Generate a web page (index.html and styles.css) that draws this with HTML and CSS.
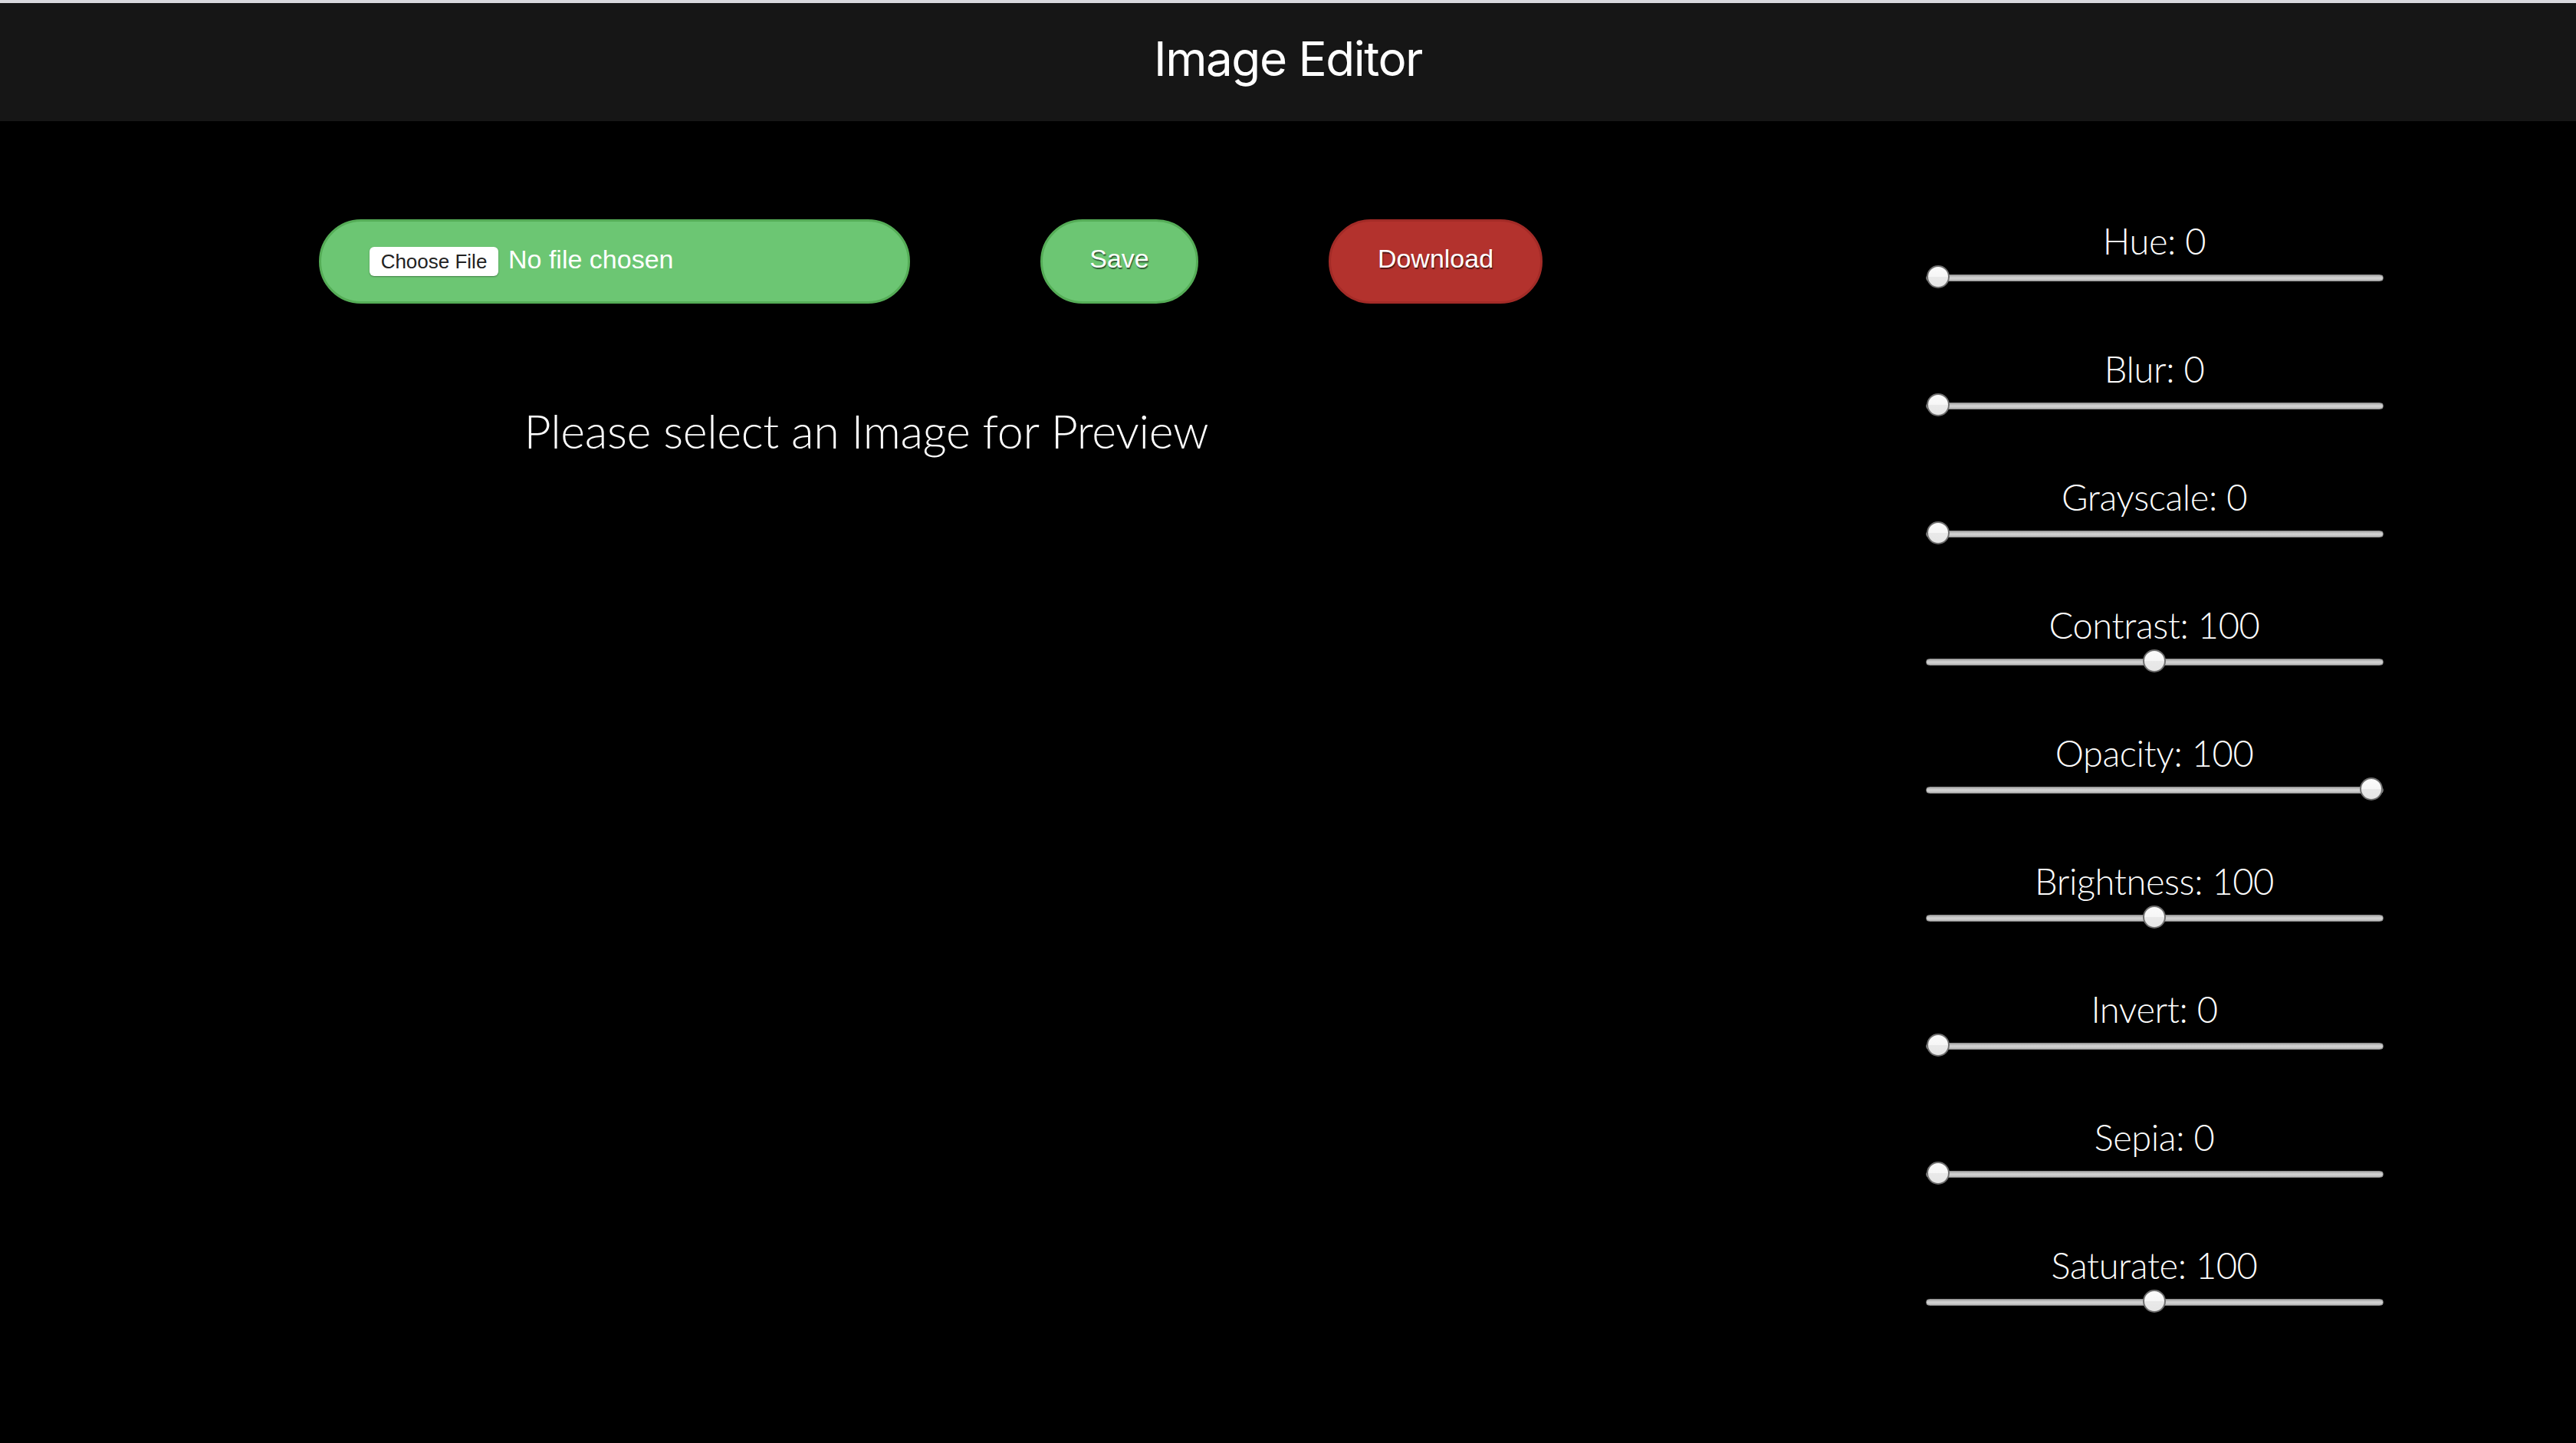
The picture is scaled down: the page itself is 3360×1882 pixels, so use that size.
FILE: index.html
```html
<!DOCTYPE html>
<html lang="en">
<head>
<meta charset="utf-8">
<title>Image Editor</title>
<link rel="stylesheet" href="styles.css">
</head>
<body>
<div class="topline"></div>
<header class="header">
  <h1 class="title">Image Editor</h1>
</header>
<main class="main">
  <section class="workspace">
    <div class="toolbar">
      <label class="btn btn-green file-pill">
        <span class="choose">Choose File</span>
        <span class="nofile">No file chosen</span>
      </label>
      <button class="btn btn-green btn-save">Save</button>
      <button class="btn btn-red btn-download">Download</button>
    </div>
    <p class="prompt">Please select an Image for Preview</p>
  </section>
  <aside class="controls">
    <div class="control"><div class="label">Hue: 0</div><input class="range" type="range" min="0" max="360" value="0"></div>
    <div class="control"><div class="label">Blur: 0</div><input class="range" type="range" min="0" max="10" value="0"></div>
    <div class="control"><div class="label">Grayscale: 0</div><input class="range" type="range" min="0" max="100" value="0"></div>
    <div class="control"><div class="label">Contrast: 100</div><input class="range" type="range" min="0" max="200" value="100"></div>
    <div class="control"><div class="label">Opacity: 100</div><input class="range" type="range" min="0" max="100" value="100"></div>
    <div class="control"><div class="label">Brightness: 100</div><input class="range" type="range" min="0" max="200" value="100"></div>
    <div class="control"><div class="label">Invert: 0</div><input class="range" type="range" min="0" max="100" value="0"></div>
    <div class="control"><div class="label">Sepia: 0</div><input class="range" type="range" min="0" max="100" value="0"></div>
    <div class="control"><div class="label">Saturate: 100</div><input class="range" type="range" min="0" max="200" value="100"></div>
  </aside>
</main>
</body>
</html>
```

FILE: styles.css
```css
* { box-sizing: border-box; }

html, body {
  margin: 0;
  padding: 0;
  background: #000;
  color: #fff;
  height: 100%;
}

body {
  font-family: "Liberation Sans", Arial, sans-serif;
}

.topline {
  height: 4px;
  background: #d9d9de;
}

.header {
  height: 154px;
  background: #161616;
  display: flex;
  align-items: center;
  justify-content: center;
  padding-bottom: 8px;
}

.title {
  margin: 0;
  font-family: Inter, "Noto Sans", sans-serif;
  font-weight: 400;
  font-size: 62px;
  line-height: 1;
  color: #fff;
  letter-spacing: -1.5px;
}

.main {
  display: flex;
}

.workspace {
  width: 2260px;
  flex: none;
}

.toolbar {
  display: flex;
  align-items: center;
  gap: 170px;
  margin-top: 128px;
  padding-left: 416px;
}

.btn {
  height: 110px;
  border-radius: 55px;
  font-family: "Liberation Sans", Arial, sans-serif;
  font-size: 34px;
  color: #fff;
  display: flex;
  align-items: center;
  justify-content: center;
  padding: 0;
  cursor: pointer;
}

.btn-green {
  background: #6cc673;
  border: 3px solid #55ad57;
}

.btn-red {
  background: #b3322d;
  border: 3px solid #a32b27;
}

.btn-save, .btn-download {
  text-shadow: 1px 2px 1px rgba(0, 0, 0, 0.55);
  padding-bottom: 8px;
}

.file-pill {
  width: 771px;
  justify-content: flex-start;
  padding-left: 63px;
}

.choose {
  display: inline-flex;
  align-items: center;
  justify-content: center;
  height: 38px;
  width: 168px;
  background: #fff;
  color: #222;
  font-size: 26px;
  border-radius: 6px;
  box-shadow: 0 1px 2px rgba(0, 0, 0, 0.35);
}

.nofile {
  margin-left: 13px;
  margin-top: -6px;
}

.btn-save { width: 206px; }
.btn-download { width: 279px; }

.prompt {
  margin: 129px 0 0;
  text-align: center;
  font-family: Lato, "Liberation Sans", sans-serif;
  font-weight: 300;
  font-size: 61px;
  line-height: 1.2;
  letter-spacing: -0.35px;
}

.controls {
  flex: 1;
  display: flex;
  flex-direction: column;
  align-items: center;
  padding-top: 133px;
  gap: 81px;
}

.control {
  display: flex;
  flex-direction: column;
  align-items: center;
}

.label {
  font-family: Lato, "Liberation Sans", sans-serif;
  font-weight: 300;
  font-size: 47px;
  line-height: 1;
  height: 48px;
  margin-bottom: 8px;
  letter-spacing: -0.4px;
}

.range {
  -webkit-appearance: none;
  appearance: none;
  width: 597px;
  height: 30px;
  margin: 0;
  background: transparent;
}

.range::-webkit-slider-runnable-track {
  height: 9px;
  border-radius: 5px;
  border: 1px solid #8c8c8c;
  background: linear-gradient(#a8a8a8 0%, #cfcfcf 40%, #d2d2d2 60%, #b4b4b4 100%);
}

.range::-webkit-slider-thumb {
  -webkit-appearance: none;
  appearance: none;
  width: 30px;
  height: 30px;
  border-radius: 50%;
  border: 2px solid #6f6f6f;
  background: linear-gradient(#fbfbfb 0%, #f6f6f6 50%, #e9e9e9 52%, #e6e6e6 100%);
  margin-top: -12.5px;
}
```
